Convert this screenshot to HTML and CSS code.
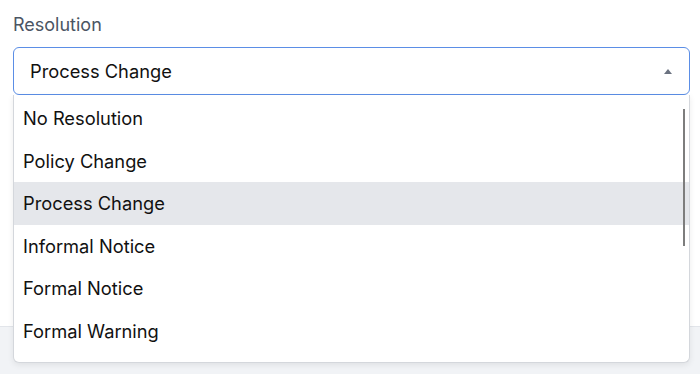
FILE: index.html
```html
<!DOCTYPE html>
<html>
<head>
<meta charset="utf-8">
<link rel="stylesheet" href="styles.css">
</head>
<body>
<div class="panel">
  <div class="field">
    <label class="label">Resolution</label>
    <div class="select-wrap">
      <div class="select">
        <span class="value">Process Change</span>
        <span class="caret"></span>
      </div>
      <ul class="menu">
        <li class="option">No Resolution</li>
        <li class="option">Policy Change</li>
        <li class="option active">Process Change</li>
        <li class="option">Informal Notice</li>
        <li class="option">Formal Notice</li>
        <li class="option">Formal Warning</li>
        <span class="scrollbar"></span>
      </ul>
    </div>
  </div>
</div>
<div class="footer"></div>
</body>
</html>
```
FILE: styles.css
```css
html, body {
  margin: 0;
  padding: 0;
  height: 100%;
}
body {
  background: #f1f3f6;
  font-family: Inter, "Noto Sans", sans-serif;
  overflow: hidden;
}
.panel {
  background: #ffffff;
  height: 327px;
  border-bottom: 1px solid #e2e5ea;
  padding: 13px 10px 0 13px;
  box-sizing: border-box;
}
.field {
  display: flex;
  flex-direction: column;
}
.label {
  font-size: 18px;
  line-height: 24px;
  color: #4b5563;
  margin-bottom: 10px;
}
.select-wrap {
  position: relative;
}
.select {
  height: 48px;
  box-sizing: border-box;
  border: 1px solid #5b8ee6;
  border-radius: 6px;
  display: flex;
  align-items: center;
  padding: 0 16px;
  justify-content: space-between;
}
.value {
  font-size: 18.3px;
  color: #111111;
}
.caret {
  width: 0;
  height: 0;
  border-left: 4.5px solid transparent;
  border-right: 4.5px solid transparent;
  border-bottom: 5px solid #6b7280;
  margin-right: 1px;
}
.menu {
  position: absolute;
  top: 48px;
  left: 0;
  right: 0;
  margin: 0;
  padding: 2px 0 0 0;
  list-style: none;
  height: 268px;
  box-sizing: border-box;
  background: #ffffff;
  border: 1px solid #d4d7dc;
  border-top: none;
  border-radius: 0 0 6px 6px;
  box-shadow: 0 2px 6px rgba(0, 0, 0, 0.08);
  overflow: hidden;
}
.option {
  height: 42.5px;
  display: flex;
  align-items: center;
  padding-left: 9px;
  font-size: 18.3px;
  color: #111111;
}
.option.active {
  background: #e5e7eb;
}
.scrollbar {
  position: absolute;
  right: 4px;
  top: 14px;
  width: 2px;
  height: 137px;
  background: #7d7d7d;
}
```
